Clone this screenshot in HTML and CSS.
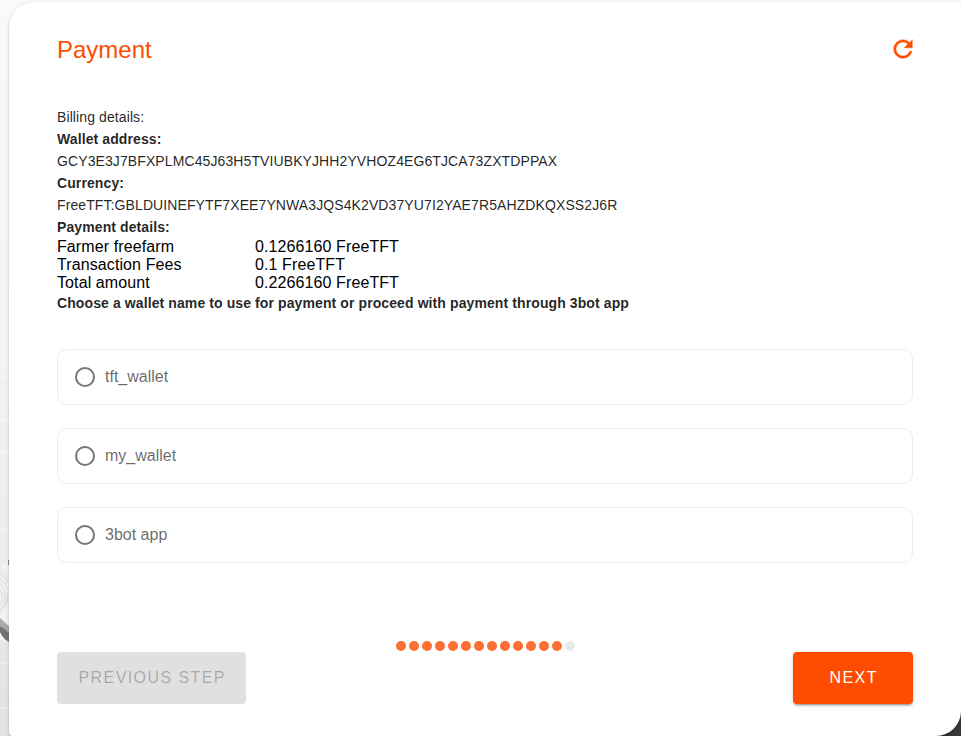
FILE: index.html
```html
<!DOCTYPE html>
<html lang="en">
<head>
<meta charset="utf-8">
<title>Payment</title>
<link rel="stylesheet" href="styles.css">
</head>
<body>
<svg class="scenery" width="961" height="736" viewBox="0 0 961 736" aria-hidden="true">
  <g stroke="#fff" stroke-width="2" opacity=".3">
    <path d="M0 368H9M0 377H9M0 386H9M0 396H9M0 420H9M0 452H9M0 475H9M0 486H9M0 530H9M0 663H9M0 708H9"/>
  </g>
  <path d="M9 560Q0 565-5 575V636Q2 642 9 642Z" fill="#f1f2f2"/>
  <g fill="none" stroke="#cfd4d4" stroke-width=".7">
    <path d="M-2 565L10 577M-2 569L10 581M-2 573Q6 577 9 585M-2 577Q5 581 7 589M-2 581Q5 587 5 598T-2 611M-2 586Q3 592 2 600T-2 606M10 588Q5 596 8 604M10 595Q5 606-2 616"/>
  </g>
  <path d="M0 618L9 626V634L0 626Z" fill="#aaa"/>
  <path d="M0 626Q5 629 9 633V642Q3 639 0 632Z" fill="#747474"/>
  <rect x="8" y="560" width="2" height="5" fill="#888"/>
  <rect x="915" y="700" width="46" height="36" fill="#393939"/>
</svg>
<main class="card">
  <header class="card-header">
    <h1>Payment</h1>
    <svg class="refresh" viewBox="0 0 24 24" role="img" aria-label="Refresh"><path d="M17.65 6.35A7.96 7.96 0 0 0 12 4a8 8 0 0 0-8 8 8 8 0 0 0 8 8c3.73 0 6.84-2.55 7.73-6h-2.08A5.99 5.99 0 0 1 12 18a6 6 0 0 1-6-6 6 6 0 0 1 6-6c1.66 0 3.14.69 4.22 1.78L13 11h7V4z"/></svg>
  </header>
  <section class="details">
    <p>Billing details:</p>
    <p><b>Wallet address:</b></p>
    <p>GCY3E3J7BFXPLMC45J63H5TVIUBKYJHH2YVHOZ4EG6TJCA73ZXTDPPAX</p>
    <p><b>Currency:</b></p>
    <p>FreeTFT:GBLDUINEFYTF7XEE7YNWA3JQS4K2VD37YU7I2YAE7R5AHZDKQXSS2J6R</p>
    <p><b>Payment details:</b></p>
    <dl class="amounts">
      <dt>Farmer freefarm</dt><dd>0.1266160 FreeTFT</dd>
      <dt>Transaction Fees</dt><dd>0.1 FreeTFT</dd>
      <dt>Total amount</dt><dd>0.2266160 FreeTFT</dd>
    </dl>
    <p><b>Choose a wallet name to use for payment or proceed with payment through 3bot app</b></p>
  </section>
  <div class="options">
    <div class="option"><span class="radio"></span>tft_wallet</div>
    <div class="option"><span class="radio"></span>my_wallet</div>
    <div class="option"><span class="radio"></span>3bot app</div>
  </div>
  <footer class="card-footer">
    <button class="btn previous" disabled>PREVIOUS STEP</button>
    <div class="steps"><i></i><i></i><i></i><i></i><i></i><i></i><i></i><i></i><i></i><i></i><i></i><i></i><i></i><i class="pending"></i></div>
    <button class="btn next">NEXT</button>
  </footer>
</main>
</body>
</html>
```
FILE: styles.css
```css
* { box-sizing: border-box; }
body {
  margin: 0;
  height: 736px;
  padding: 2px 0 0 9px;
  overflow: hidden;
  background: linear-gradient(#fafaf9, #f5f5f5 320px, #ededeb 550px, #e2e3df);
  font-family: "Liberation Sans", Arial, sans-serif;
}
.scenery { position: absolute; top: 0; left: 0; z-index: -1; }
.card {
  display: flex;
  flex-direction: column;
  width: 952px;
  height: 734px;
  padding: 32px 48px;
  background: #fff;
  border-radius: 25px 4px 25px 4px;
  box-shadow: 0 3px 1px -2px rgba(0,0,0,.2), 0 2px 2px rgba(0,0,0,.14), 0 1px 5px rgba(0,0,0,.12);
}
.card-header {
  display: flex;
  justify-content: space-between;
  align-items: center;
  height: 32px;
  margin-bottom: 40px;
  color: #fe4c01;
}
h1 { margin: 0; font-size: 24px; line-height: 32px; font-weight: 400; }
.refresh { width: 28px; height: 28px; margin: 0 -4px 2px 0; fill: currentColor; stroke: currentColor; stroke-width: .35; }
.details { color: rgba(0,0,0,.87); font-size: 14px; line-height: 22px; }
.details p { margin: 0; letter-spacing: .1px; }
.amounts {
  display: grid;
  grid-template-columns: 198px 1fr;
  margin: 0;
  color: #000;
  font-size: 16px;
  line-height: 18px;
  letter-spacing: .1px;
}
.amounts dd { margin: 0; }
.options { display: grid; gap: 23px; margin-top: 35px; }
.option {
  display: flex;
  align-items: center;
  height: 56px;
  padding-left: 17px;
  border: 1px solid #ebeeef;
  border-radius: 10px;
  color: rgba(0,0,0,.6);
  font-size: 16px;
}
.radio { width: 20px; height: 20px; margin-right: 10px; border: 2px solid #757575; border-radius: 50%; }
.card-footer { display: flex; justify-content: space-between; margin-top: auto; }
.btn {
  height: 52px;
  padding: 0 0 0 1.4px;
  border: 0;
  border-radius: 4px;
  font: 16px "Liberation Sans", Arial, sans-serif;
  letter-spacing: 1.43px;
}
.previous { width: 189px; background: #e0e0e0; color: rgba(0,0,0,.26); }
.next {
  width: 120px;
  background: #fe4c01;
  color: #fff;
  box-shadow: 0 3px 1px -2px rgba(0,0,0,.2), 0 2px 2px rgba(0,0,0,.14), 0 1px 5px rgba(0,0,0,.12);
}
.steps { display: flex; gap: 3px; margin: -11.5px 69px 0 0; }
.steps i { width: 10px; height: 10px; border-radius: 50%; background: #fd6f33; }
.steps .pending { background: #e9eaeb; }
```
